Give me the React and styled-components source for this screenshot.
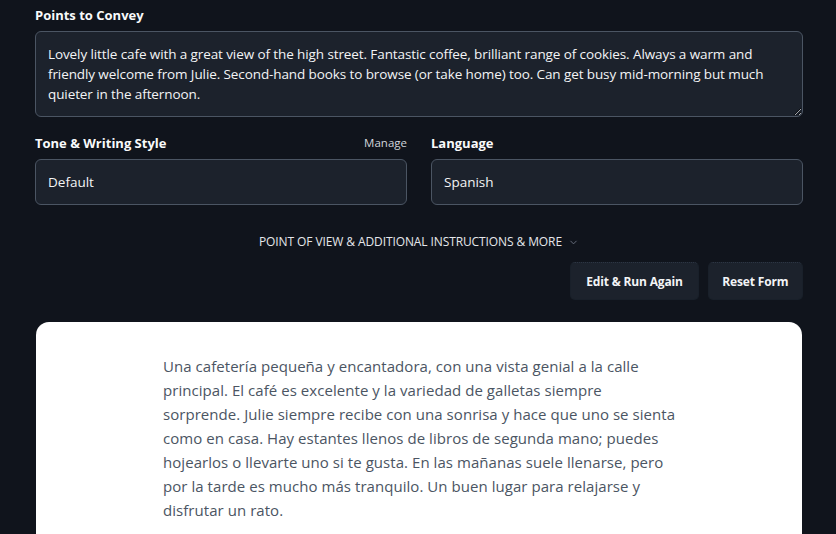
import React from "react"
import styled, {createGlobalStyle} from "styled-components"

const GlobalStyle = createGlobalStyle`
  html, body {
    margin: 0;
    padding: 0;
    background: #10141c;
  }
  body {
    font-family: "Open Sans", "Noto Sans", sans-serif;
    color: #f3f4f6;
    overflow: hidden;
  }
`

const Page = styled.div`
  padding: 5px 33px 0 35px;
  display: flex;
  flex-direction: column;
`

const Label = styled.label`
  display: block;
  font-size: 13px;
  font-weight: 700;
  line-height: 20px;
  color: #f9fafb;
`

const LabelRow = styled.div`
  display: flex;
  justify-content: space-between;
  align-items: center;
  margin-bottom: 6px;
`

const ManageLink = styled.span`
  font-size: 11.5px;
  color: #d1d5db;
  line-height: 20px;
`

const TextArea = styled.textarea`
  box-sizing: border-box;
  width: 100%;
  height: 86px;
  margin: 0;
  padding: 12px;
  background: #1c222c;
  border: 1px solid #4b5563;
  border-radius: 6px;
  color: #f3f4f6;
  font-family: inherit;
  font-size: 13.5px;
  letter-spacing: -0.1px;
  line-height: 20px;
  resize: vertical;
  outline: none;
`

const TwoCol = styled.div`
  display: grid;
  grid-template-columns: 1fr 1fr;
  gap: 24px;
  margin-top: 16px;
`

const SelectBox = styled.div`
  box-sizing: border-box;
  height: 46px;
  display: flex;
  align-items: center;
  padding: 0 12px;
  background: #1c222c;
  border: 1px solid #4b5563;
  border-radius: 6px;
  font-size: 13.5px;
  color: #f3f4f6;
`

const MoreToggle = styled.div`
  margin-top: 28px;
  display: flex;
  justify-content: center;
  align-items: center;
  gap: 6px;
  font-size: 12px;
  line-height: 18px;
  color: #e5e7eb;
  text-transform: uppercase;
  letter-spacing: -0.1px;
`

const Actions = styled.div`
  margin-top: 11px;
  display: flex;
  justify-content: flex-end;
  gap: 9px;
`

const Button = styled.button`
  height: 38px;
  padding: 0 ${p => p.$pad}px;
  background: #1c222c;
  border: 1px solid #19202a;
  border-top: 1px dotted #2c3543;
  border-radius: 5px;
  color: #f3f4f6;
  font-family: inherit;
  font-size: 12px;
  font-weight: 700;
  letter-spacing: -0.15px;
`

const Card = styled.div`
  margin: 22px 1px 0 1px;
  background: #ffffff;
  border-radius: 13px;
  padding: 32px 14px 40px 18px;
  display: flex;
  justify-content: center;
`

const Prose = styled.p`
  margin: 0;
  width: 516px;
  font-size: 15px;
  line-height: 24px;
  color: #4b5563;
  letter-spacing: 0.05px;
`

const Chevron = () => (
  <svg width="11" height="11" viewBox="0 0 24 24" fill="none" stroke="#6b7280" strokeWidth="2" strokeLinecap="round" strokeLinejoin="round">
    <path d="M6 9l6 6 6-6" />
  </svg>
)

const points = "Lovely little cafe with a great view of the high street. Fantastic coffee, brilliant range of cookies. Always a warm and friendly welcome from Julie. Second-hand books to browse (or take home) too. Can get busy mid-morning but much quieter in the afternoon."

const result = "Una cafetería pequeña y encantadora, con una vista genial a la calle principal. El café es excelente y la variedad de galletas siempre sorprende. Julie siempre recibe con una sonrisa y hace que uno se sienta como en casa. Hay estantes llenos de libros de segunda mano; puedes hojearlos o llevarte uno si te gusta. En las mañanas suele llenarse, pero por la tarde es mucho más tranquilo. Un buen lugar para relajarse y disfrutar un rato."

const App = () => {
  return (
    <>
      <GlobalStyle />
      <Page>
        <LabelRow>
          <Label>Points to Convey</Label>
        </LabelRow>
        <TextArea defaultValue={points} />

        <TwoCol>
          <div>
            <LabelRow>
              <Label>Tone &amp; Writing Style</Label>
              <ManageLink>Manage</ManageLink>
            </LabelRow>
            <SelectBox>Default</SelectBox>
          </div>
          <div>
            <LabelRow>
              <Label>Language</Label>
            </LabelRow>
            <SelectBox>Spanish</SelectBox>
          </div>
        </TwoCol>

        <MoreToggle>
          Point of view &amp; additional instructions &amp; more
          <Chevron />
        </MoreToggle>

        <Actions>
          <Button $pad={15}>Edit &amp; Run Again</Button>
          <Button $pad={13.5}>Reset Form</Button>
        </Actions>

        <Card>
          <Prose>{result}</Prose>
        </Card>
      </Page>
    </>
  )
}

export default App
